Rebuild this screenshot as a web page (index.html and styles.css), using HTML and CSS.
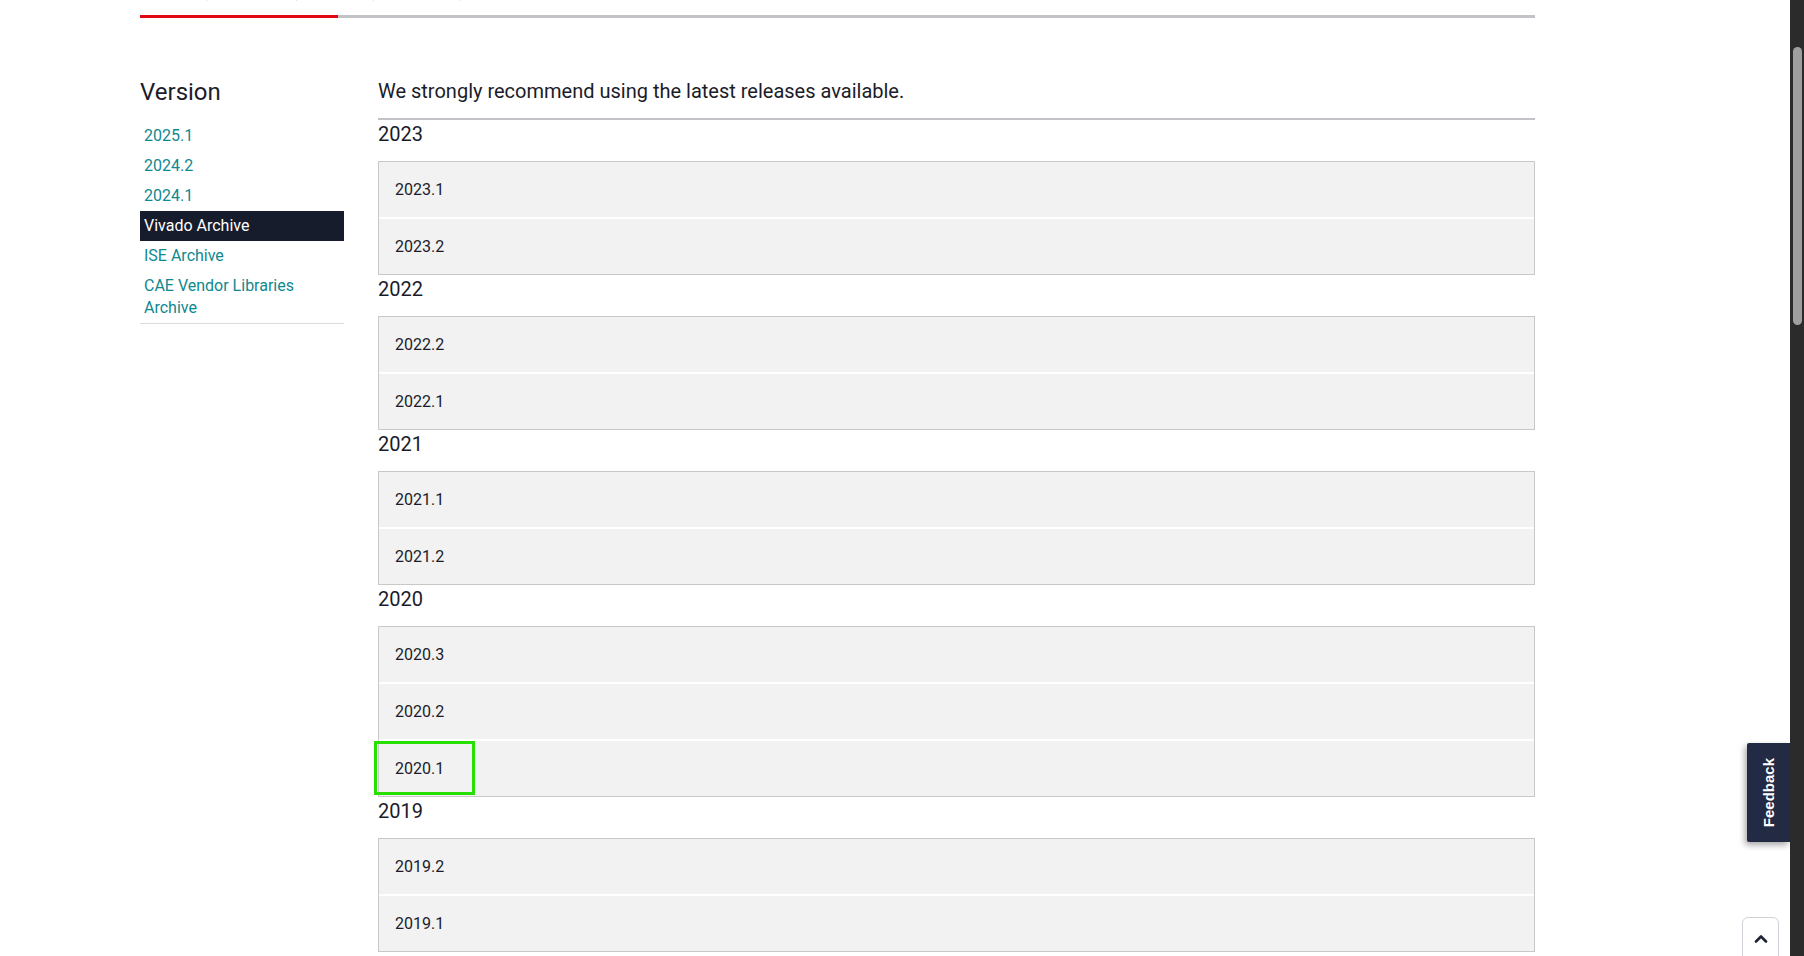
FILE: index.html
```html
<!DOCTYPE html>
<html lang="en">
<head>
<meta charset="utf-8">
<title>Downloads - Vivado Archive</title>
<link rel="stylesheet" href="styles.css">
</head>
<body>
<div class="window">
  <div class="page">
    <div class="tabs">
      <div class="tab tab-active">Vivado (HW Developer)</div>
      <div class="tab">Vitis (SW Developer)</div>
    </div>
    <div class="layout">
      <aside class="sidebar">
        <h2 class="side-title">Version</h2>
        <ul class="side-nav">
          <li><a class="side-link">2025.1</a></li>
          <li><a class="side-link">2024.2</a></li>
          <li><a class="side-link">2024.1</a></li>
          <li><a class="side-link active">Vivado Archive</a></li>
          <li><a class="side-link">ISE Archive</a></li>
          <li><a class="side-link">CAE Vendor Libraries Archive</a></li>
        </ul>
      </aside>
      <main class="main">
        <p class="intro">We strongly recommend using the latest releases available.</p>

        <h3 class="year">2023</h3>
        <div class="box">
          <div class="row">2023.1</div>
          <div class="row">2023.2</div>
        </div>

        <h3 class="year">2022</h3>
        <div class="box">
          <div class="row">2022.2</div>
          <div class="row">2022.1</div>
        </div>

        <h3 class="year">2021</h3>
        <div class="box">
          <div class="row">2021.1</div>
          <div class="row">2021.2</div>
        </div>

        <h3 class="year">2020</h3>
        <div class="box">
          <div class="row">2020.3</div>
          <div class="row">2020.2</div>
          <div class="row">2020.1<span class="highlight"></span></div>
        </div>

        <h3 class="year">2019</h3>
        <div class="box">
          <div class="row">2019.2</div>
          <div class="row">2019.1</div>
        </div>
      </main>
    </div>

    <div class="feedback"><span class="feedback-text">Feedback</span></div>
    <div class="to-top">
      <svg width="14" height="9" viewBox="0 0 14 9"><path d="M2 7.5 L7 2.5 L12 7.5" fill="none" stroke="#1f2433" stroke-width="2.6" stroke-linecap="round" stroke-linejoin="round"/></svg>
    </div>
  </div>
  <div class="scrollbar"><div class="thumb"></div></div>
</div>
</body>
</html>
```

FILE: styles.css
```css
* { box-sizing: border-box; }
html, body { margin: 0; padding: 0; }
body {
  width: 1804px;
  height: 956px;
  overflow: hidden;
  font-family: Roboto, "Liberation Sans", Arial, sans-serif;
  color: #1b1c2a;
  background: #fff;
}
.window { display: flex; height: 956px; }
.page { position: relative; flex: 1; overflow: hidden; }

.tabs {
  display: flex;
  margin-left: 140px;
  width: 1395px;
  height: 18px;
  border-bottom: 3px solid #c3c3c7;
}
.tab {
  display: flex;
  align-items: flex-end;
  height: 18px;
  padding-bottom: 18px;
  font-size: 14px;
  line-height: 16px;
  white-space: nowrap;
  color: #1b1c2a;
}
.tab-active {
  width: 198px;
  padding-left: 17px;
  border-bottom: 3px solid #e30613;
  margin-bottom: -3px;
  height: 18px;
  padding-bottom: 15px;
}

.layout { display: flex; margin-left: 140px; width: 1395px; gap: 34px; }
.sidebar { width: 204px; flex: none; }
.side-title {
  margin: 58px 0 13px 0;
  font-size: 24px;
  line-height: 32px;
  font-weight: 400;
  color: #1b1c2a;
}
.side-nav {
  list-style: none;
  margin: 0;
  padding: 0;
  border-bottom: 1px solid #dcdcdc;
}
.side-link {
  display: block;
  padding: 4px 4px;
  font-size: 16px;
  line-height: 22px;
  color: #0f8890;
}
.side-link.active { background: #171c2c; color: #fff; }

.main { flex: 1; padding-top: 59px; }
.intro {
  margin: 0;
  padding-bottom: 13px;
  font-size: 20px;
  line-height: 28px;
  border-bottom: 2px solid #c3c3c7;
}
.year {
  margin: 0 0 13px;
  font-size: 20px;
  line-height: 28px;
  font-weight: 400;
  color: #1b1c2a;
}
.box {
  display: flex;
  flex-direction: column;
  gap: 2px;
  border: 1px solid #c8c8c8;
  background: #fff;
}
.row {
  position: relative;
  padding: 16px 16px;
  font-size: 16px;
  line-height: 23px;
  background: #f2f2f2;
  color: #1b1c2a;
}
.highlight {
  position: absolute;
  left: -5px;
  top: 0;
  width: 101px;
  height: 54px;
  border: 3px solid #27e000;
}

.feedback {
  position: absolute;
  right: 0;
  top: 743px;
  width: 43px;
  height: 99px;
  background: #232a44;
  border-radius: 2px 0 0 2px;
  box-shadow: -2px 3px 6px rgba(0, 0, 0, 0.35);
  display: flex;
  align-items: center;
  justify-content: center;
}
.feedback-text {
  writing-mode: vertical-rl;
  transform: rotate(180deg);
  color: #fff;
  font-family: "Liberation Sans", Arial, sans-serif;
  font-weight: 700;
  font-size: 15px;
}
.to-top {
  position: absolute;
  right: 11px;
  top: 917px;
  width: 37px;
  height: 50px;
  border: 1px solid #cfd2d8;
  border-radius: 6px;
  background: #fff;
  display: flex;
  justify-content: center;
  padding-top: 16px;
}
.to-top svg { display: block; }

.scrollbar { width: 14px; flex: none; background: #2b2b2b; }
.thumb {
  margin: 47px 0 0 3px;
  width: 9px;
  height: 278px;
  border-radius: 5px;
  background: #9f9f9f;
}
```
